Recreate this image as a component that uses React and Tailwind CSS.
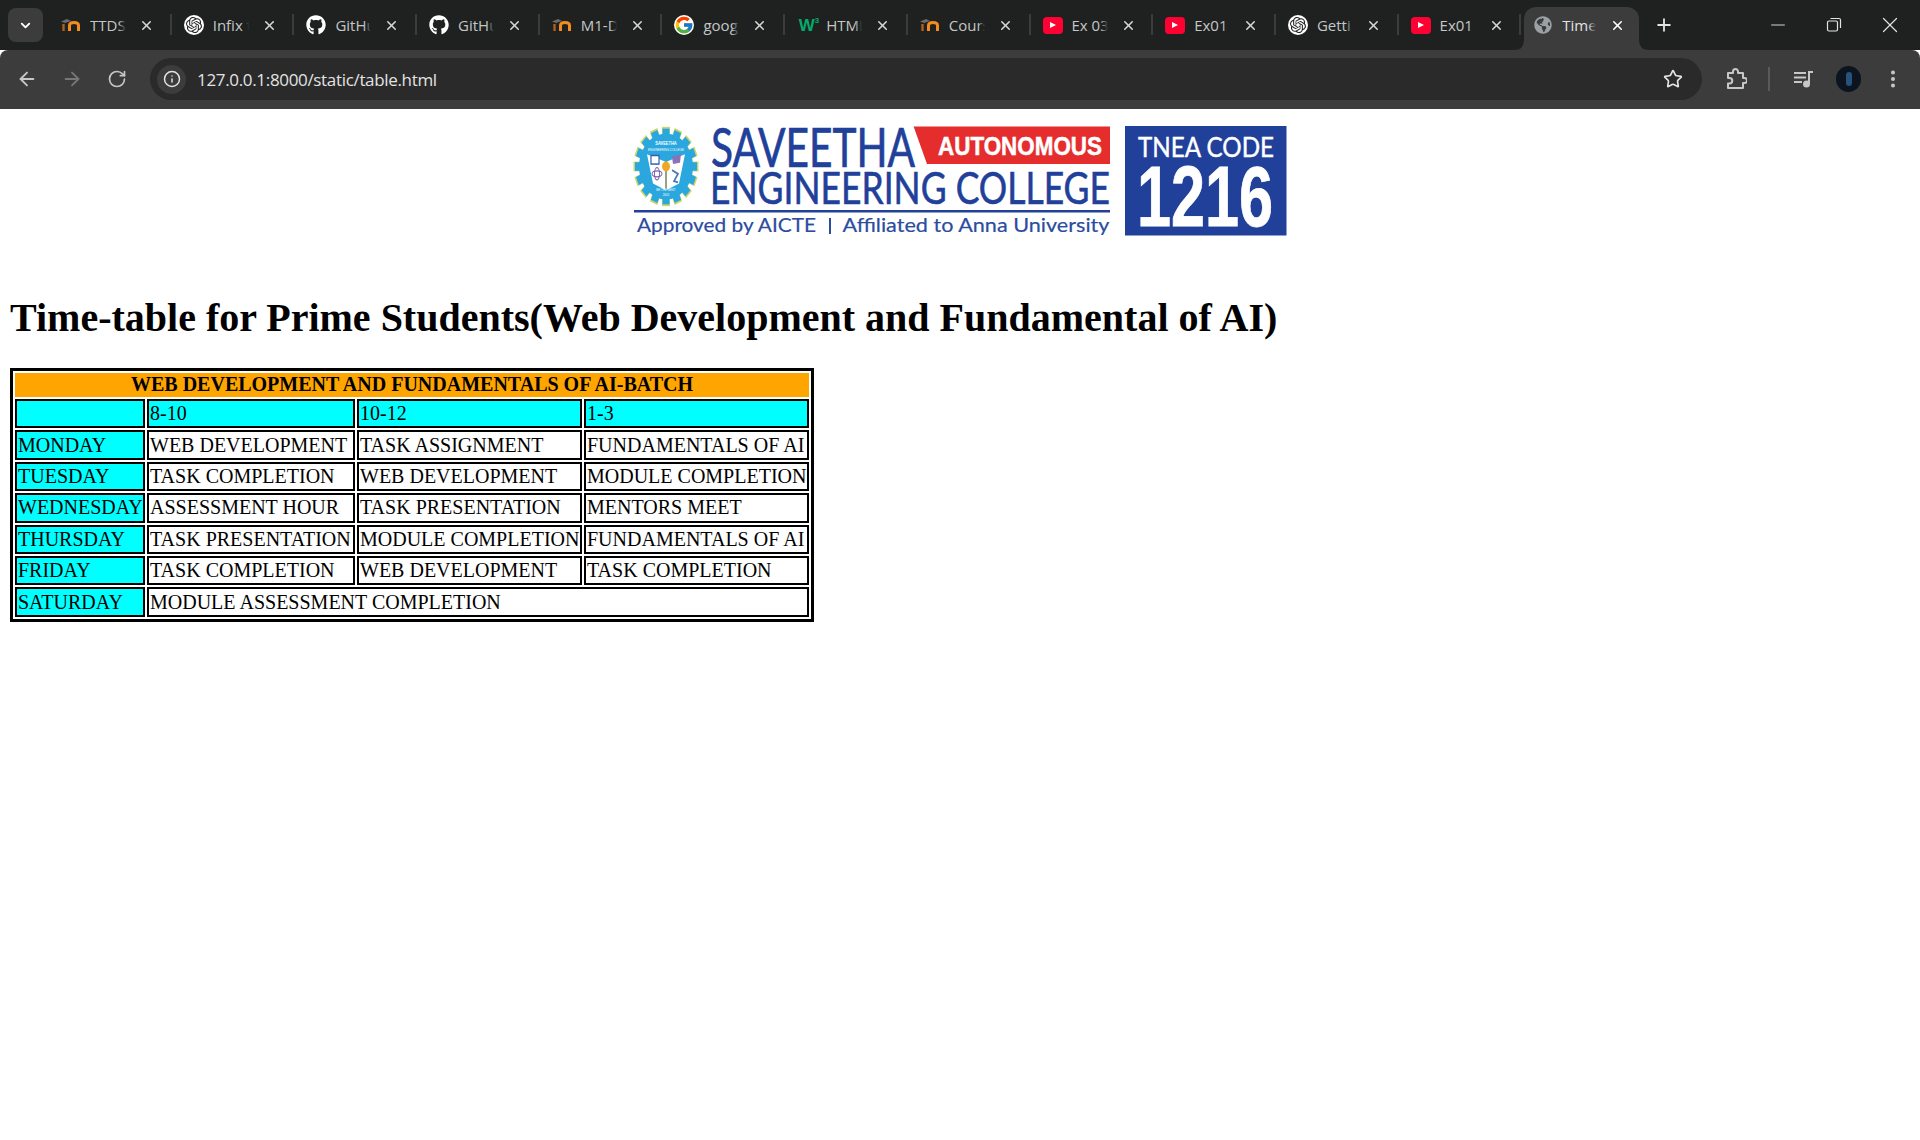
import { ArrowLeft, ArrowRight, RotateCw, Info, Star, EllipsisVertical, Plus, X, Minus, ChevronDown } from "lucide-react";
import { FaGithub, FaGlobeAmericas } from "react-icons/fa";
import { FcGoogle } from "react-icons/fc";
import { SiOpenai } from "react-icons/si";

const MoodleIcon = () => (
    <svg width="22" height="16" viewBox="0 0 22 16">
        <path d="M1 4.5 L7 2 L11 4 L5 6 Z" fill="#6b6b6b" />
        <path d="M3.5 7 V14" stroke="#a8641e" strokeWidth="2.4" />
        <path d="M9.5 14 V8.5 Q9.5 5.5 14 5.5 Q18.5 5.5 18.5 8.5 V14" fill="none" stroke="#f28c1e" strokeWidth="3" />
    </svg>
);

const OpenAiIcon = () => (
    <span className="w-5 h-5 rounded-full bg-white flex items-center justify-center">
        <SiOpenai className="w-4 h-4 text-[#222]" />
    </span>
);

const GithubIcon = () => <FaGithub className="w-5 h-5 text-white" />;

const W3Icon = () => (
    <span className="flex items-start font-bold text-[#04AA6D] leading-none w-5 ml-[3px] font-['Liberation_Sans',sans-serif]">
        <span className="text-[17px]">W</span>
        <span className="text-[8px] text-[#04AA6D]">3</span>
    </span>
);

const YoutubeIcon = () => (
    <span className="w-5 h-[17px] rounded bg-[#ff0033] flex items-center justify-center">
        <svg width="8" height="8" viewBox="0 0 8 8"><path d="M1 1 L7 4 L1 7 Z" fill="#fff" /></svg>
    </span>
);

const tabs = [
    { title: "TTDS", icon: <MoodleIcon /> },
    { title: "Infix t", icon: <OpenAiIcon /> },
    { title: "GitHu", icon: <GithubIcon /> },
    { title: "GitHu", icon: <GithubIcon /> },
    { title: "M1-D", icon: <MoodleIcon /> },
    { title: "goog", icon: <FcGoogle className="w-5 h-5 bg-white rounded-full" /> },
    { title: "HTML", icon: <W3Icon /> },
    { title: "Cours", icon: <MoodleIcon /> },
    { title: "Ex 03", icon: <YoutubeIcon /> },
    { title: "Ex01", icon: <YoutubeIcon /> },
    { title: "Getti", icon: <OpenAiIcon /> },
    { title: "Ex01", icon: <YoutubeIcon /> },
];

const Tab = ({ title, icon }) => (
    <div className="w-[122.7px] h-[36px] mb-[7px] flex items-center shrink-0 relative">
        <div className="w-[40px] pl-[6px] flex justify-center items-center shrink-0">{icon}</div>
        <div className="w-[36px] ml-[2px] overflow-hidden whitespace-nowrap text-[15px] text-[#c4c7c5] relative">
            {title}
            <div className="absolute right-0 top-0 bottom-0 w-[7px] bg-linear-to-r from-transparent to-[#1f2121]" />
        </div>
        <X className="w-[15px] h-[15px] ml-[13px] text-[#d5d5d5]" strokeWidth={2.5} />
        <div className="absolute right-[-1px] top-[7px] w-[2px] h-[21px] bg-[#3c3c3c]" />
    </div>
);

const TabStrip = () => (
    <div className="h-[50px] bg-[#1f2121] flex items-end font-['Open_Sans',sans-serif]">
        <div className="w-[35px] h-[34px] ml-2 mb-[8px] mr-[5px] rounded-lg bg-[#3c3c3c] flex items-center justify-center shrink-0">
            <ChevronDown className="w-[15px] h-[15px] text-white" strokeWidth={3} />
        </div>
        {tabs.map((t, i) => <Tab key={i} title={t.title} icon={t.icon} />)}
        <div className="w-[115px] h-[43px] pb-[7px] bg-[#3c3c3c] rounded-t-xl flex items-center shrink-0 relative ml-[4px]">
            <svg className="absolute left-[-10px] bottom-0" width="10" height="10"><path d="M10 0 V10 H0 Q10 10 10 0 Z" fill="#3c3c3c" /></svg>
            <svg className="absolute right-[-10px] bottom-0" width="10" height="10"><path d="M0 0 V10 H10 Q0 10 0 0 Z" fill="#3c3c3c" /></svg>
            <FaGlobeAmericas className="w-[18px] h-[18px] ml-[10px] text-[#9aa0a6] shrink-0" />
            <div className="w-[34px] ml-[10px] overflow-hidden whitespace-nowrap text-[15px] text-[#e3e3e3] relative">
                Time
                <div className="absolute right-0 top-0 bottom-0 w-[8px] bg-linear-to-r from-transparent to-[#3c3c3c]" />
            </div>
            <X className="w-[15px] h-[15px] ml-[14px] text-white" strokeWidth={2.5} />
        </div>
        <div className="w-[50px] h-[36px] mb-[7px] flex items-center justify-center shrink-0">
            <Plus className="w-5 h-5 text-[#e3e3e3]" strokeWidth={2.2} />
        </div>
        <div className="flex-1" />
        <div className="h-[50px] flex items-center pr-[17px] text-[#e3e3e3]">
            <Minus className="w-[22px] h-[22px]" strokeWidth={1} />
            <svg className="ml-[35px]" width="20" height="20" viewBox="0 0 20 20" fill="none" stroke="currentColor" strokeWidth="1.2">
                <rect x="3.5" y="6" width="10" height="10" rx="1.5" />
                <path d="M6.5 3.5 H15 Q16.5 3.5 16.5 5 V13" />
            </svg>
            <X className="w-[26px] h-[26px] ml-[33px]" strokeWidth={1.1} />
        </div>
    </div>
);

const PuzzleIcon = () => (
    <svg width="22" height="24" viewBox="0 0 22 24" fill="none" stroke="#c7c7c7" strokeWidth="2" strokeLinejoin="round">
        <path d="M3 6 H8 V4.5 A2.5 2.5 0 0 1 13 4.5 V6 H18 V11 H19.5 A2.5 2.5 0 0 1 19.5 16 H18 V21 H3 V16.5 H4.5 A2.5 2.5 0 0 0 4.5 11 H3 Z" />
    </svg>
);

const MediaIcon = () => (
    <svg width="20" height="18" viewBox="0 0 20 18" fill="none" stroke="#c7c7c7" strokeWidth="2">
        <path d="M0 3 H12 M0 7.5 H12 M0 12 H8" />
        <path d="M15 14 V2 H19" />
        <circle cx="12.5" cy="14" r="2.5" fill="#c7c7c7" />
    </svg>
);

const Toolbar = () => (
    <div className="h-[59px] bg-[#3c3c3c] rounded-t-lg flex items-start pt-[8px] text-[#c7c7c7]">
        <div className="w-[150px] h-[42px] flex items-center shrink-0 pl-[16px]">
            <ArrowLeft className="w-[22px] h-[22px]" strokeWidth={2} />
            <ArrowRight className="w-[22px] h-[22px] ml-[23px] text-[#777]" strokeWidth={2} />
            <RotateCw className="w-[20px] h-[20px] ml-[24px]" strokeWidth={2} />
        </div>
        <div className="w-[1552px] h-[42px] rounded-full bg-[#2a2a2a] flex items-center shrink-0 pl-[7px] pr-[19px]">
            <div className="w-[29px] h-[29px] rounded-full bg-[#3c3c3c] flex items-center justify-center shrink-0">
                <Info className="w-[18px] h-[18px] text-[#e3e3e3]" strokeWidth={2} />
            </div>
            <div className="ml-[11px] pt-[1px] text-[17px] text-[#e3e3e3] font-['Open_Sans',sans-serif] tracking-[-0.33px]">127.0.0.1:8000/static/table.html</div>
            <div className="flex-1" />
            <Star className="w-[20px] h-[20px] text-[#e3e3e3]" strokeWidth={2} />
        </div>
        <div className="h-[42px] flex items-center pl-[23px] shrink-0">
            <PuzzleIcon />
            <div className="w-[2px] h-[24px] bg-[#5a5a5a] ml-[21px] mr-[24px]" />
            <MediaIcon />
            <div className="w-[25px] h-[26px] rounded-full bg-[#0c1420] ml-[22px] flex items-center justify-center overflow-hidden">
                <div className="w-[6px] h-[14px] bg-[#27527a] rounded-sm" />
            </div>
            <EllipsisVertical className="w-[22px] h-[22px] ml-[21px]" strokeWidth={2.4} />
        </div>
    </div>
);

// logo is a drawing, coordinates are offset from (630,119) on the page
const gearTeeth = Array.from({ length: 16 }, (_, i) => i * 22.5);

const Logo = () => (
    <svg className="block" width="660" height="120" viewBox="0 0 660 120">
        <g transform="translate(36 47.5) scale(1 1.22)">
            {gearTeeth.map((a) => (
                <rect key={a} x="-4" y="-32.5" width="8" height="10" fill="#c9d76a" transform={`rotate(${a})`} />
            ))}
            {gearTeeth.map((a) => (
                <rect key={a} x="-3.5" y="-31" width="7" height="8" fill="#2aa7df" transform={`rotate(${a})`} />
            ))}
            <circle r="27" fill="#2aa7df" />
            <path d="M-19 -10 L-1 -4 L-1 19 L-13 14 Z M1 -4 L19 -10 L13 14 L1 19 Z" fill="#fff" />
            <rect x="-15" y="-9" width="8" height="7" fill="#fff" stroke="#2d5fb0" strokeWidth="1.2" />
            <path d="M6 -8 L15 -10 L14 -3 L7 -2 Z" fill="#8a74b8" />
            <circle cx="0" cy="0" r="4" fill="#f4a623" />
            <path d="M0 4 V18" stroke="#f4a623" strokeWidth="1" />
            <ellipse cx="-9" cy="6" rx="5" ry="2.5" fill="none" stroke="#7a5fa8" strokeWidth="1" />
            <ellipse cx="-9" cy="6" rx="2.5" ry="5" fill="none" stroke="#7a5fa8" strokeWidth="1" />
            <path d="M6 3 L12 6 L8 12 L12 13" fill="none" stroke="#4a78b8" strokeWidth="1.6" />
            <text x="0" y="-18" textAnchor="middle" fontSize="4" fontWeight="700" fill="#fff" fontFamily="Liberation Sans">SAVEETHA</text>
            <text x="0" y="-13" textAnchor="middle" fontSize="3" fill="#fff" fontFamily="Liberation Sans">ENGINEERING COLLEGE</text>
            <text x="0" y="20" textAnchor="middle" fontSize="3" fill="#fff" fontFamily="Liberation Sans">BE THE BEST</text>
            <text x="0" y="24" textAnchor="middle" fontSize="3" fill="#fff" fontFamily="Liberation Sans">2001</text>
        </g>
        <text x="81" y="48" fontSize="55" fill="#21409a" stroke="#21409a" strokeWidth="0.7" fontFamily="Lato" textLength="204" lengthAdjust="spacingAndGlyphs">SAVEETHA</text>
        <polygon points="283.6,7.4 480,7.4 480,45 297,45" fill="#e52d2d" />
        <text x="308" y="35.5" fontSize="26" fontWeight="700" fill="#fff" stroke="#fff" strokeWidth="0.5" fontFamily="Liberation Sans" textLength="164" lengthAdjust="spacingAndGlyphs">AUTONOMOUS</text>
        <text x="80" y="85" fontSize="44" fill="#21409a" stroke="#21409a" strokeWidth="0.6" fontFamily="Lato" textLength="400" lengthAdjust="spacingAndGlyphs">ENGINEERING COLLEGE</text>
        <rect x="4" y="91" width="476" height="2.5" fill="#21409a" />
        <text x="7" y="113" fontSize="20" fill="#2b4c9f" stroke="#2b4c9f" strokeWidth="0.2" fontFamily="Lato" textLength="179" lengthAdjust="spacingAndGlyphs">Approved by AICTE</text>
        <rect x="199" y="99" width="2" height="16" fill="#2b4c9f" />
        <text x="212.5" y="113" fontSize="20" fill="#2b4c9f" stroke="#2b4c9f" strokeWidth="0.2" fontFamily="Lato" textLength="267" lengthAdjust="spacingAndGlyphs">Affiliated to Anna University</text>
        <rect x="495" y="7" width="161.5" height="109.5" fill="#21409a" />
        <text x="508" y="37.5" fontSize="26" fill="#fff" stroke="#fff" strokeWidth="0.4" fontFamily="Lato" textLength="136" lengthAdjust="spacingAndGlyphs">TNEA CODE</text>
        <text x="507" y="107" fontSize="86" fontWeight="700" fill="#fff" stroke="#fff" strokeWidth="0.8" fontFamily="Liberation Sans" textLength="136" lengthAdjust="spacingAndGlyphs">1216</text>
    </svg>
);

const dayCell = "border-2 border-black bg-[#00ffff] pl-[1px] pr-0 py-0 h-[29.4px] whitespace-nowrap text-left font-normal";
const cell = "border-2 border-black pl-[1px] pr-0 py-0 h-[29.4px] whitespace-nowrap";

const rows = [
    ["MONDAY", "WEB DEVELOPMENT", "TASK ASSIGNMENT", "FUNDAMENTALS OF AI"],
    ["TUESDAY", "TASK COMPLETION", "WEB DEVELOPMENT", "MODULE COMPLETION"],
    ["WEDNESDAY", "ASSESSMENT HOUR", "TASK PRESENTATION", "MENTORS MEET"],
    ["THURSDAY", "TASK PRESENTATION", "MODULE COMPLETION", "FUNDAMENTALS OF AI"],
    ["FRIDAY", "TASK COMPLETION", "WEB DEVELOPMENT", "TASK COMPLETION"],
];

const TimeTable = () => (
    <table className="table-fixed w-[804px] border-[3px] border-black border-separate border-spacing-[2px] text-[20px] leading-[23px] text-black">
        <colgroup>
            <col className="w-[130px]" />
            <col className="w-[208px]" />
            <col className="w-[225px]" />
            <col className="w-[225px]" />
        </colgroup>
        <tbody>
            <tr>
                <th colSpan={4} className="bg-[#ffa500] h-[24px] pt-0 pb-[1px] px-0 text-center font-bold">WEB DEVELOPMENT AND FUNDAMENTALS OF AI-BATCH</th>
            </tr>
            <tr>
                <td className={dayCell}></td>
                <td className={dayCell}>8-10</td>
                <td className={dayCell}>10-12</td>
                <td className={dayCell}>1-3</td>
            </tr>
            {rows.map((r) => (
                <tr key={r[0]}>
                    <td className={dayCell}>{r[0]}</td>
                    <td className={cell}>{r[1]}</td>
                    <td className={cell}>{r[2]}</td>
                    <td className={cell}>{r[3]}</td>
                </tr>
            ))}
            <tr>
                <td className={dayCell}>SATURDAY</td>
                <td colSpan={3} className={cell}>MODULE ASSESSMENT COMPLETION</td>
            </tr>
        </tbody>
    </table>
);

const App = () => {
    return (
        <div className="w-[1920px] h-[1140px] bg-white overflow-hidden">
            <TabStrip />
            <Toolbar />
            <div className="pt-[10px] flex justify-center">
                <Logo />
            </div>
            <div className="px-[10px] font-['Liberation_Serif',serif] text-black">
                <h1 className="text-[40px] font-bold leading-[46px] mt-[56px] mb-[27px] whitespace-nowrap">Time-table for Prime Students(Web Development and Fundamental of AI)</h1>
                <TimeTable />
            </div>
        </div>
    );
};

export default App;
